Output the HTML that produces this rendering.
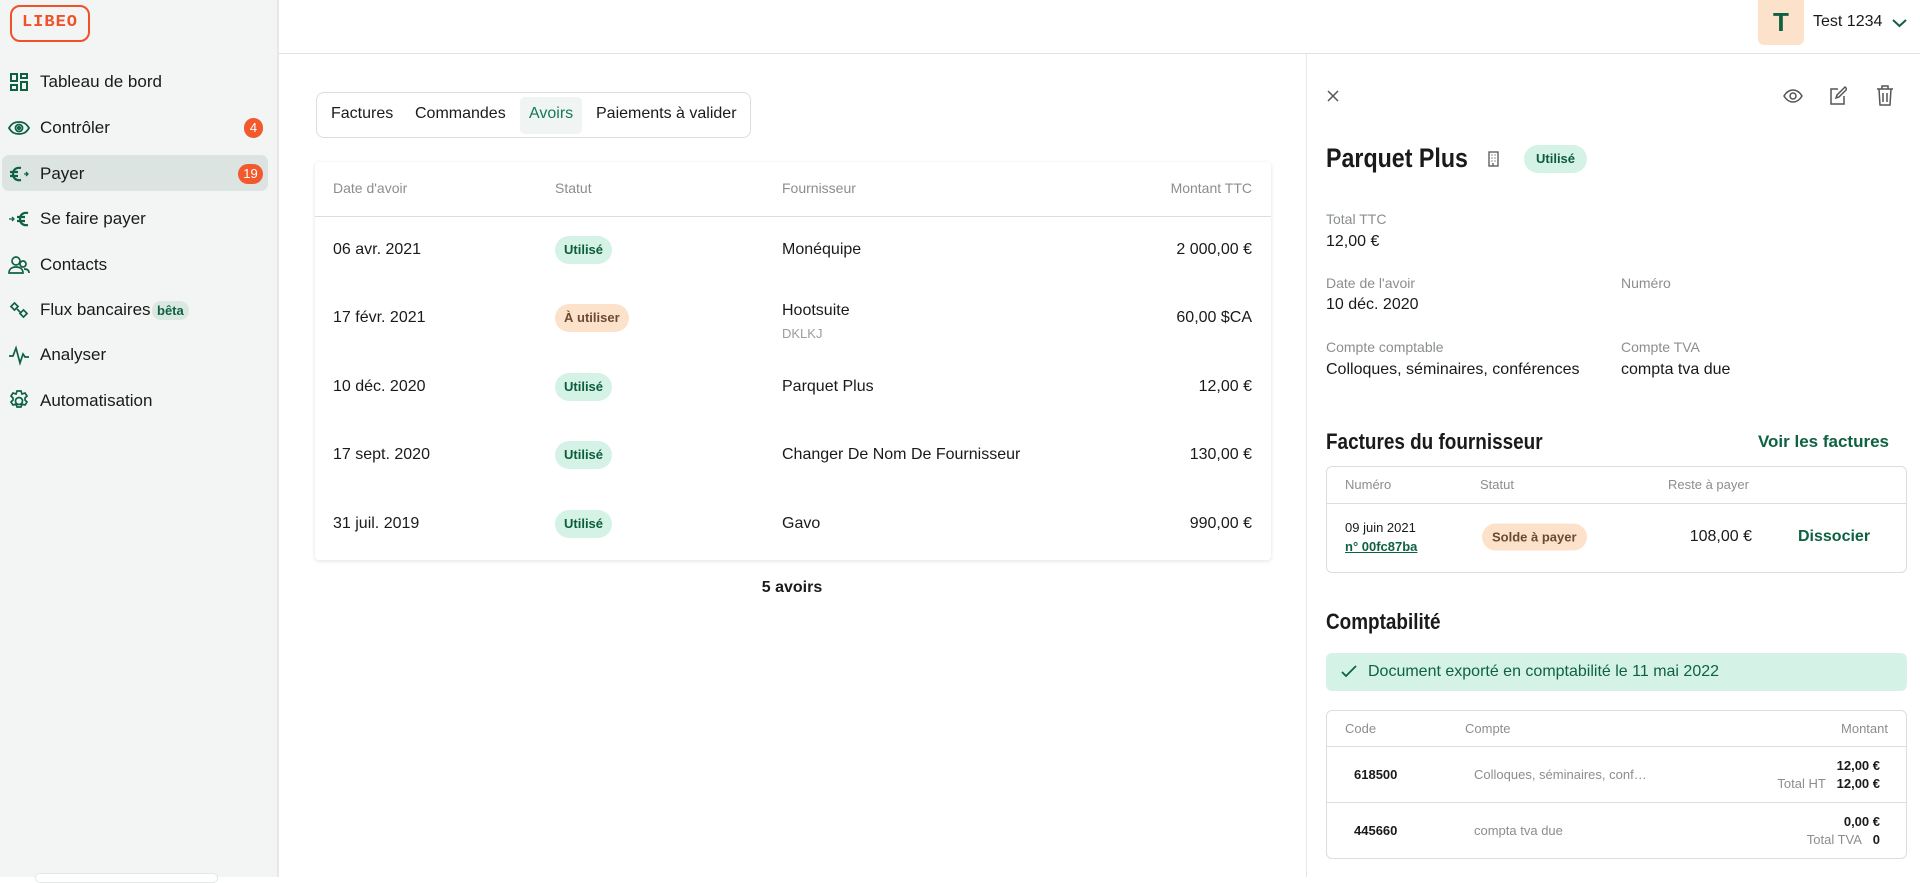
<!DOCTYPE html>
<html><head><meta charset="utf-8"><style>
*{box-sizing:border-box;margin:0;padding:0}
body{width:1920px;height:877px;overflow:hidden;font-family:"Liberation Sans",sans-serif;color:#1a1a1a;background:#fff;position:relative}
.a{position:absolute;white-space:nowrap}
.side{position:absolute;left:0;top:0;width:279px;height:877px;background:#f2f5f4;border-right:2px solid #e6e8e6}
.nav{position:absolute;left:40px;font-size:17px;transform:translateY(-50%)}
.ico{position:absolute;left:8px;width:22px;height:22px;transform:translateY(-50%)}
.badge{position:absolute;background:#f25a2e;color:#fff;font-size:13px;border-radius:10px;height:20px;line-height:20px;text-align:center;transform:translateY(-50%)}
.pill{position:absolute;border-radius:14px;font-weight:bold;font-size:13px;height:28px;line-height:28px;padding:0 9px;transform:translateY(-50%)}
.g{background:#d4f3e6;color:#0d5c3c}
.o{background:#fde2cb;color:#6b4a33}
.hd{color:#8a8f8c;font-size:14px}
.t16{font-size:16px}
.n{font-weight:bold;transform:scaleX(.86);transform-origin:left center}
.green{color:#0e6242}
</style></head><body>
<div class="side">
 <div class="a" style="left:10px;top:5px;width:80px;height:37px;border:2.5px solid #f0502a;border-radius:10px;color:#f0502a;font-family:'Liberation Mono',monospace;font-weight:bold;font-size:17px;text-align:center;line-height:32px;letter-spacing:1px">LIBEO</div>
 <div class="a" style="left:2px;top:155px;width:266px;height:36px;background:#dbe4e1;border-radius:7px"></div>
 <svg class="ico" style="top:82px" viewBox="0 0 22 22" fill="none" stroke="#0e6242" stroke-width="2"><rect x="3" y="3" width="6" height="7"/><rect x="13" y="3" width="6" height="4"/><rect x="3" y="14" width="6" height="5"/><rect x="13" y="11" width="6" height="8"/></svg>
 <div class="nav" style="top:82px">Tableau de bord</div>
 <svg class="ico" style="top:128px" viewBox="0 0 22 22" fill="none" stroke="#0e6242" stroke-width="1.8"><path d="M1 11c3-5 6-6 10-6s7 1 10 6c-3 5-6 6-10 6s-7-1-10-6z"/><circle cx="11" cy="11" r="3.5"/><circle cx="11" cy="11" r="1.2"/></svg>
 <div class="nav" style="top:128px">Contrôler</div>
 <div class="badge" style="left:244px;top:128px;width:19px">4</div>
 <svg class="ico" style="top:174px" viewBox="0 0 22 22" fill="none" stroke="#0e6242" stroke-width="2.2"><path d="M13 5c-5-1-8 2-8 6s3 7 8 6M2 9h8M2 13h8"/><path d="M16 11h4M18 9l2 2-2 2" stroke-width="1.3"/></svg>
 <div class="nav" style="top:174px">Payer</div>
 <div class="badge" style="left:238px;top:174px;width:25px">19</div>
 <svg class="ico" style="top:219px" viewBox="0 0 22 22" fill="none" stroke="#0e6242" stroke-width="2.2"><path d="M20 5c-5-1-8 2-8 6s3 7 8 6M9 9h8M9 13h8"/><path d="M1 11h5M4 9l2 2-2 2" stroke-width="1.3"/></svg>
 <div class="nav" style="top:219px">Se faire payer</div>
 <svg class="ico" style="top:265px" viewBox="0 0 22 22" fill="none" stroke="#0e6242" stroke-width="1.7"><circle cx="8" cy="7" r="4"/><path d="M1 19c0-4 3-6 7-6s7 2 7 6z"/><circle cx="15" cy="10" r="3"/><path d="M16 15c3 0 5 1 5 4"/></svg>
 <div class="nav" style="top:265px">Contacts</div>
 <svg class="ico" style="top:310px" viewBox="0 0 22 22" fill="none" stroke="#0e6242" stroke-width="1.7"><rect x="4" y="5" width="5" height="5" transform="rotate(45 6.5 7.5)"/><rect x="13" y="12" width="5" height="5" transform="rotate(45 15.5 14.5)"/><path d="M9 10l4 4"/></svg>
 <div class="nav" style="top:310px">Flux bancaires</div>
 <div class="a" style="left:152px;top:301px;height:19px;line-height:19px;padding:0 5px;border-radius:9px;background:#dbe8e2;color:#0e6242;font-weight:bold;font-size:13px">bêta</div>
 <svg class="ico" style="top:355px" viewBox="0 0 22 22" fill="none" stroke="#0e6242" stroke-width="1.7"><path d="M1 12h4l3-8 4 15 3-9 2 3h4"/></svg>
 <div class="nav" style="top:355px">Analyser</div>
 <svg class="ico" style="top:401px" viewBox="0 0 22 22" fill="none" stroke="#0e6242" stroke-width="1.7"><circle cx="11" cy="11" r="3.5"/><path d="M9 1h4l1 3 3-1 2 3-2 2 0 2 2 2-2 3-3-1-1 3H9l-1-3-3 1-2-3 2-2v-2L3 6l2-3 3 1z"/></svg>
 <div class="nav" style="top:401px">Automatisation</div>
 <div class="a" style="left:35px;top:873px;width:183px;height:10px;background:#fff;border:1px solid #e3e6e4;border-radius:8px"></div>
</div>
<div class="a" style="left:279px;top:53px;width:1641px;height:1px;background:#e2e4e2"></div>
<div class="a" style="left:1758px;top:0;width:46px;height:45px;background:#fde2cb;border-radius:0 0 6px 6px;color:#0e6242;font-weight:bold;font-size:26px;text-align:center;line-height:45px">T</div>
<div class="a t16" style="left:1813px;top:13px">Test 1234</div>
<svg class="a" style="left:1892px;top:18px" width="15" height="10" viewBox="0 0 15 10" fill="none" stroke="#0e6242" stroke-width="2"><path d="M1 2l6.5 6 6.5-6"/></svg>

<!-- tabs -->
<div class="a" style="left:316px;top:92px;width:435px;height:46px;border:1px solid #dcdedc;border-radius:8px"></div>
<div class="a" style="left:520px;top:97px;width:62px;height:37px;background:#f0f4f2;border-radius:5px"></div>
<div class="a t16" style="left:331px;top:105px">Factures</div>
<div class="a t16" style="left:415px;top:105px">Commandes</div>
<div class="a t16" style="left:529px;top:105px;color:#157a52">Avoirs</div>
<div class="a t16" style="left:596px;top:105px">Paiements à valider</div>

<!-- table -->
<div class="a" style="left:315px;top:162px;width:956px;height:398px;background:#fff;border-radius:4px;box-shadow:0 1px 4px rgba(0,0,0,.12)"></div>
<div class="a" style="left:315px;top:216px;width:956px;height:1px;background:#dcdedc"></div>
<div class="a hd" style="left:333px;top:180px">Date d'avoir</div>
<div class="a hd" style="left:555px;top:180px">Statut</div>
<div class="a hd" style="left:782px;top:180px">Fournisseur</div>
<div class="a hd" style="right:668px;top:180px">Montant TTC</div>

<div class="a t16" style="left:333px;top:241px">06 avr. 2021</div>
<div class="pill g" style="left:555px;top:250px">Utilisé</div>
<div class="a t16" style="left:782px;top:241px">Monéquipe</div>
<div class="a t16" style="right:668px;top:241px">2 000,00 €</div>

<div class="a t16" style="left:333px;top:309px">17 févr. 2021</div>
<div class="pill o" style="left:555px;top:318px">À utiliser</div>
<div class="a t16" style="left:782px;top:302px">Hootsuite</div>
<div class="a" style="left:782px;top:326px;font-size:13px;color:#9a9d9b">DKLKJ</div>
<div class="a t16" style="right:668px;top:309px">60,00 $CA</div>

<div class="a t16" style="left:333px;top:378px">10 déc. 2020</div>
<div class="pill g" style="left:555px;top:387px">Utilisé</div>
<div class="a t16" style="left:782px;top:378px">Parquet Plus</div>
<div class="a t16" style="right:668px;top:378px">12,00 €</div>

<div class="a t16" style="left:333px;top:446px">17 sept. 2020</div>
<div class="pill g" style="left:555px;top:455px">Utilisé</div>
<div class="a t16" style="left:782px;top:446px">Changer De Nom De Fournisseur</div>
<div class="a t16" style="right:668px;top:446px">130,00 €</div>

<div class="a t16" style="left:333px;top:515px">31 juil. 2019</div>
<div class="pill g" style="left:555px;top:524px">Utilisé</div>
<div class="a t16" style="left:782px;top:515px">Gavo</div>
<div class="a t16" style="right:668px;top:515px">990,00 €</div>

<div class="a t16" style="left:742px;top:579px;width:100px;text-align:center;font-weight:bold">5 avoirs</div>

<!-- right panel -->
<div class="a" style="left:1306px;top:54px;width:1px;height:823px;background:#e6e8e6"></div>
<svg class="a" style="left:1327px;top:90px" width="12" height="12" viewBox="0 0 12 12" stroke="#555" stroke-width="1.5"><path d="M1 1l10 10M11 1L1 11"/></svg>
<svg class="a" style="left:1783px;top:87px" width="20" height="18" viewBox="0 0 20 18" fill="none" stroke="#555" stroke-width="1.5"><path d="M1 9c3-5 6-6 9-6s6 1 9 6c-3 5-6 6-9 6s-6-1-9-6z"/><circle cx="10" cy="9" r="3"/></svg>
<svg class="a" style="left:1829px;top:86px" width="18" height="20" viewBox="0 0 18 20" fill="none" stroke="#555" stroke-width="1.5"><path d="M9 3H2v15h13v-8"/><path d="M16 1l-8 8-1 3 3-1 8-8z"/></svg>
<svg class="a" style="left:1876px;top:85px" width="18" height="21" viewBox="0 0 18 21" fill="none" stroke="#555" stroke-width="1.5"><path d="M1 4h16M6 4V1h6v3M3 4l1 16h10l1-16M7 8v9M11 8v9"/></svg>

<div class="a n" style="left:1326px;top:143px;font-size:27px">Parquet Plus</div>
<svg class="a" style="left:1488px;top:151px" width="11" height="16" viewBox="0 0 11 16" fill="none" stroke="#555" stroke-width="1.3"><rect x="1" y="1" width="9" height="14"/><path d="M3.5 4h1M6.5 4h1M3.5 7h1M6.5 7h1M3.5 10h1M6.5 10h1M5 15v-3"/></svg>
<div class="pill g" style="left:1524px;top:159px;height:28px;line-height:28px;padding:0 12px">Utilisé</div>

<div class="a hd" style="left:1326px;top:211px">Total TTC</div>
<div class="a t16" style="left:1326px;top:233px">12,00 €</div>
<div class="a hd" style="left:1326px;top:275px">Date de l'avoir</div>
<div class="a t16" style="left:1326px;top:296px">10 déc. 2020</div>
<div class="a hd" style="left:1621px;top:275px">Numéro</div>
<div class="a hd" style="left:1326px;top:339px">Compte comptable</div>
<div class="a t16" style="left:1326px;top:361px">Colloques, séminaires, conférences</div>
<div class="a hd" style="left:1621px;top:339px">Compte TVA</div>
<div class="a t16" style="left:1621px;top:361px">compta tva due</div>

<div class="a n" style="left:1326px;top:429px;font-size:22px">Factures du fournisseur</div>
<div class="a green" style="right:31px;top:432px;font-size:17px;font-weight:bold">Voir les factures</div>
<div class="a" style="left:1326px;top:466px;width:581px;height:107px;border:1px solid #dcdedc;border-radius:6px"></div>
<div class="a" style="left:1327px;top:503px;width:579px;height:1px;background:#dcdedc"></div>
<div class="a hd" style="left:1345px;top:477px;font-size:13px">Numéro</div>
<div class="a hd" style="left:1480px;top:477px;font-size:13px">Statut</div>
<div class="a hd" style="left:1668px;top:477px;font-size:13px">Reste à payer</div>
<div class="a" style="left:1345px;top:520px;font-size:13px">09 juin 2021</div>
<div class="a" style="left:1345px;top:539px;font-size:13px;font-weight:bold;color:#0e6242;text-decoration:underline">n° 00fc87ba</div>
<div class="pill o" style="left:1482px;top:537px;height:27px;line-height:27px;font-size:13px;padding:0 10px">Solde à payer</div>
<div class="a t16" style="right:168px;top:528px">108,00 €</div>
<div class="a green" style="left:1798px;top:528px;font-size:16px;font-weight:bold">Dissocier</div>

<div class="a n" style="left:1326px;top:609px;font-size:22px">Comptabilité</div>
<div class="a" style="left:1326px;top:653px;width:581px;height:38px;background:#d4f3e6;border-radius:6px"></div>
<svg class="a" style="left:1341px;top:665px" width="16" height="13" viewBox="0 0 16 13" fill="none" stroke="#0e6242" stroke-width="1.8"><path d="M1 7l4 4 10-10"/></svg>
<div class="a green" style="left:1368px;top:663px;font-size:16px">Document exporté en comptabilité le 11 mai 2022</div>
<div class="a" style="left:1326px;top:710px;width:581px;height:149px;border:1px solid #dcdedc;border-radius:6px"></div>
<div class="a" style="left:1327px;top:746px;width:579px;height:1px;background:#dcdedc"></div>
<div class="a" style="left:1327px;top:802px;width:579px;height:1px;background:#dcdedc"></div>
<div class="a hd" style="left:1345px;top:721px;font-size:13px">Code</div>
<div class="a hd" style="left:1465px;top:721px;font-size:13px">Compte</div>
<div class="a hd" style="right:32px;top:721px;font-size:13px">Montant</div>
<div class="a" style="left:1354px;top:767px;font-size:13px;font-weight:bold">618500</div>
<div class="a" style="left:1474px;top:767px;font-size:13px;color:#8a8f8c">Colloques, séminaires, conf…</div>
<div class="a" style="right:40px;top:758px;font-size:13px;font-weight:bold">12,00 €</div>
<div class="a" style="right:40px;top:776px;font-size:13px"><span style="color:#8a8f8c">Total HT</span>&nbsp;&nbsp; <b>12,00 €</b></div>
<div class="a" style="left:1354px;top:823px;font-size:13px;font-weight:bold">445660</div>
<div class="a" style="left:1474px;top:823px;font-size:13px;color:#8a8f8c">compta tva due</div>
<div class="a" style="right:40px;top:814px;font-size:13px;font-weight:bold">0,00 €</div>
<div class="a" style="right:40px;top:832px;font-size:13px"><span style="color:#8a8f8c">Total TVA</span>&nbsp;&nbsp; <b>0</b></div>
</body></html>
